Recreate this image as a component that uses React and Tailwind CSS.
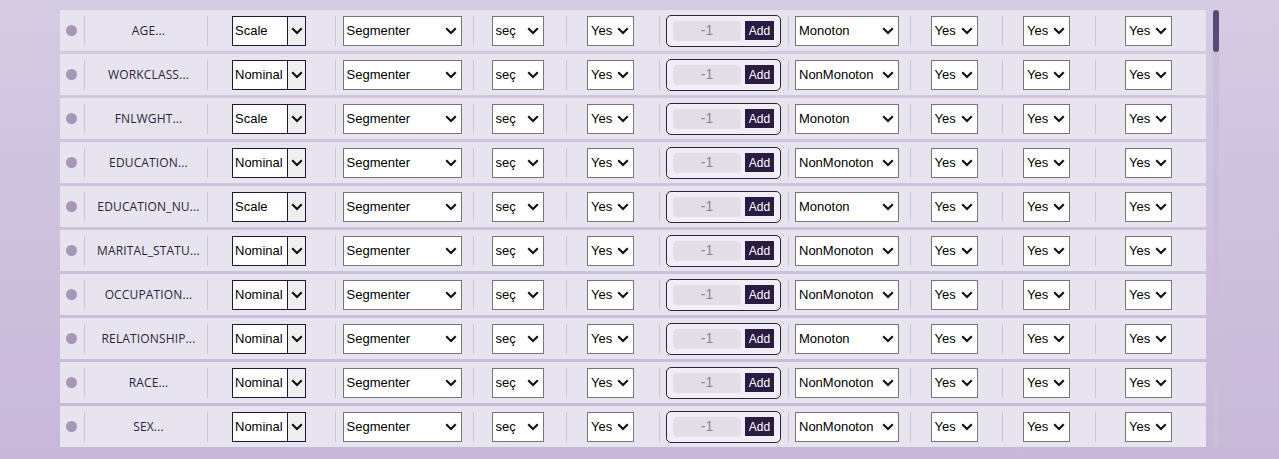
import React from "react";

const rows = [
  { name: "AGE...", type: "Scale", mono: "Monoton" },
  { name: "WORKCLASS...", type: "Nominal", mono: "NonMonoton" },
  { name: "FNLWGHT...", type: "Scale", mono: "Monoton" },
  { name: "EDUCATION...", type: "Nominal", mono: "NonMonoton" },
  { name: "EDUCATION_NU...", type: "Scale", mono: "Monoton" },
  { name: "MARITAL_STATU...", type: "Nominal", mono: "NonMonoton" },
  { name: "OCCUPATION...", type: "Nominal", mono: "NonMonoton" },
  { name: "RELATIONSHIP...", type: "Nominal", mono: "Monoton" },
  { name: "RACE...", type: "Nominal", mono: "NonMonoton" },
  { name: "SEX...", type: "Nominal", mono: "NonMonoton" },
];

const Chevron = () => (
  <svg width="12" height="8" viewBox="0 0 12 8" fill="none">
    <path d="M1.2 1.2L6 6l4.8-4.8" stroke="#111" strokeWidth="2.1" />
  </svg>
);

// plain select look-alike
const Select = ({ value, width }) => (
  <div
    className={`flex items-center justify-between h-[30px] bg-white border border-[#767676] pl-[3px] pr-[4px] text-[13px] text-black ${width}`}
  >
    <span>{value}</span>
    <Chevron />
  </div>
);

const Divider = () => <div className="w-px h-[30px] bg-[#cbc5d4] shrink-0" />;

const Cell = ({ width, children }) => (
  <div className={`flex items-center justify-center shrink-0 ${width}`}>{children}</div>
);

const Row = ({ row }) => (
  <div className="flex items-center h-[41px] bg-[#e8e4ef]">
    <div className="w-[24px] shrink-0 flex items-center pl-[6px]">
      <div className="w-[11px] h-[11px] rounded-full bg-[#a496b4]" />
    </div>
    <Divider />
    <Cell width="w-[122px] pl-[5px]">
      <span className="text-[12px] text-[#2b1f44] tracking-[0.15px]" style={{ fontFamily: "'Open Sans', Lato, sans-serif" }}>
        {row.name}
      </span>
    </Cell>
    <Divider />
    <Cell width="w-[127px] pr-[5px]">
      {/* type select with button */}
      <div className="flex h-[30px] w-[74px] border border-[#1d1836] bg-white text-[13px] text-black">
        <span className="flex-1 flex items-center pl-[2px]">{row.type}</span>
        <div className="w-[18px] flex items-center justify-center bg-[#efefef] border-l border-[#1d1836]">
          <Chevron />
        </div>
      </div>
    </Cell>
    <Divider />
    <Cell width="w-[137px] pr-[5px]">
      <Select value="Segmenter" width="w-[119px]" />
    </Cell>
    <Divider />
    <Cell width="w-[92px] pr-[5px]">
      <Select value="seç" width="w-[52px]" />
    </Cell>
    <Divider />
    <Cell width="w-[92px] pr-[5px]">
      <Select value="Yes" width="w-[47px]" />
    </Cell>
    <Divider />
    <Cell width="w-[128px] pr-[1px]">
      <div className="flex items-center gap-[4px] h-[32px] w-[115px] rounded-[5px] border border-[#2b2340] bg-[#f1eef5] pl-[6px]">
        <div className="w-[68px] h-[20px] rounded-[4px] bg-[#e2dee8] flex items-center justify-center text-[14px] text-[#8a8590]">
          -1
        </div>
        <div className="w-[29px] h-[19px] bg-[#2a1b42] text-white text-[12px] flex items-center justify-center">
          Add
        </div>
      </div>
    </Cell>
    <Divider />
    <Cell width="w-[121px] pr-[5px]">
      <Select value={row.mono} width="w-[104px]" />
    </Cell>
    <Divider />
    <Cell width="w-[91px] pr-[5px]">
      <Select value="Yes" width="w-[47px]" />
    </Cell>
    <Divider />
    <Cell width="w-[92px] pr-[5px]">
      <Select value="Yes" width="w-[47px]" />
    </Cell>
    <Divider />
    <Cell width="w-[110px] pr-[5px]">
      <Select value="Yes" width="w-[47px]" />
    </Cell>
  </div>
);

export default function App() {
  return (
    <div
      className="h-[459px] w-full flex pl-[60px] pt-[10px] bg-gradient-to-b from-[#d4cbe2] to-[#c7b8d8] overflow-hidden"
      style={{ fontFamily: "'Liberation Sans', Arial, sans-serif" }}
    >
      <div className="flex flex-col gap-[3px] w-[1146px]">
        {rows.map((r) => (
          <Row key={r.name} row={r} />
        ))}
      </div>
      {/* scrollbar */}
      <div className="ml-[7px] w-[6px] h-[437px] bg-[#cabfd9]">
        <div className="h-[42px] w-full rounded-full bg-[#5a4a78]" />
      </div>
    </div>
  );
}
